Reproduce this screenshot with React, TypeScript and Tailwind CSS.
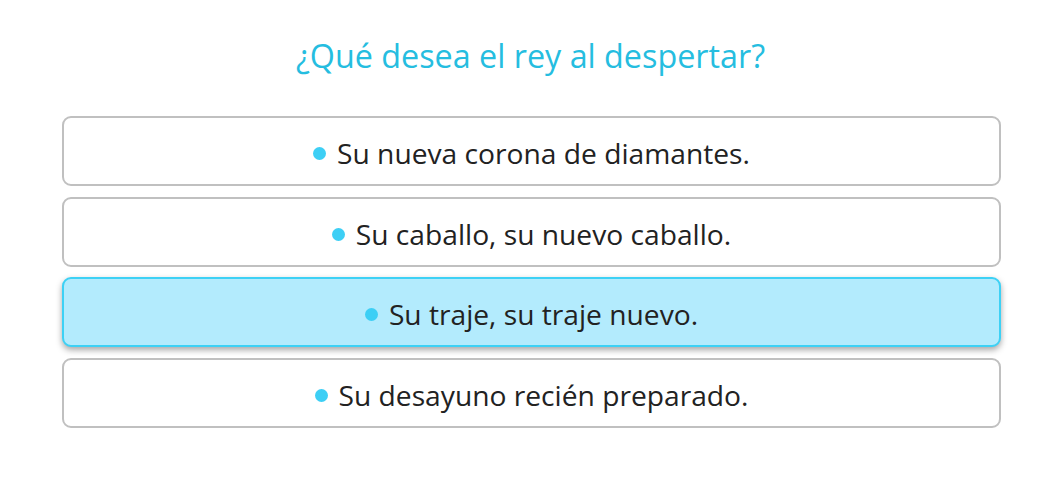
import React, { useState } from 'react';

const options = [
  'Su nueva corona de diamantes.',
  'Su caballo, su nuevo caballo.',
  'Su traje, su traje nuevo.',
  'Su desayuno recién preparado.',
];

const App: React.FC = () => {
  const [selected, setSelected] = useState(2);

  return (
    <div className="min-h-screen bg-white pt-[30px] px-[62px] font-['Open_Sans','Noto_Sans',sans-serif]">
      <h1 className="text-center text-[32.3px] leading-[50px] text-[#25bde0] font-normal">
        ¿Qué desea el rey al despertar?
      </h1>
      <div className="mt-[36px] flex flex-col gap-[10.5px] w-[939px]">
        {options.map((opt, i) => (
          <button
            key={i}
            onClick={() => setSelected(i)}
            className={`h-[70px] w-full rounded-[9px] border-2 flex items-center justify-center gap-[11px] pt-[5px] text-[28.2px] text-[#222] ${
              i === selected
                ? 'bg-[#b3ebfd] border-[#3dd1f5] shadow-[0_3px_6px_rgba(0,0,0,0.35)]'
                : 'bg-white border-[#c0c0c0]'
            }`}
          >
            <span className="w-[13px] h-[13px] rounded-full bg-[#3dcff5] shrink-0" />
            <span>{opt}</span>
          </button>
        ))}
      </div>
    </div>
  );
};

export default App;
